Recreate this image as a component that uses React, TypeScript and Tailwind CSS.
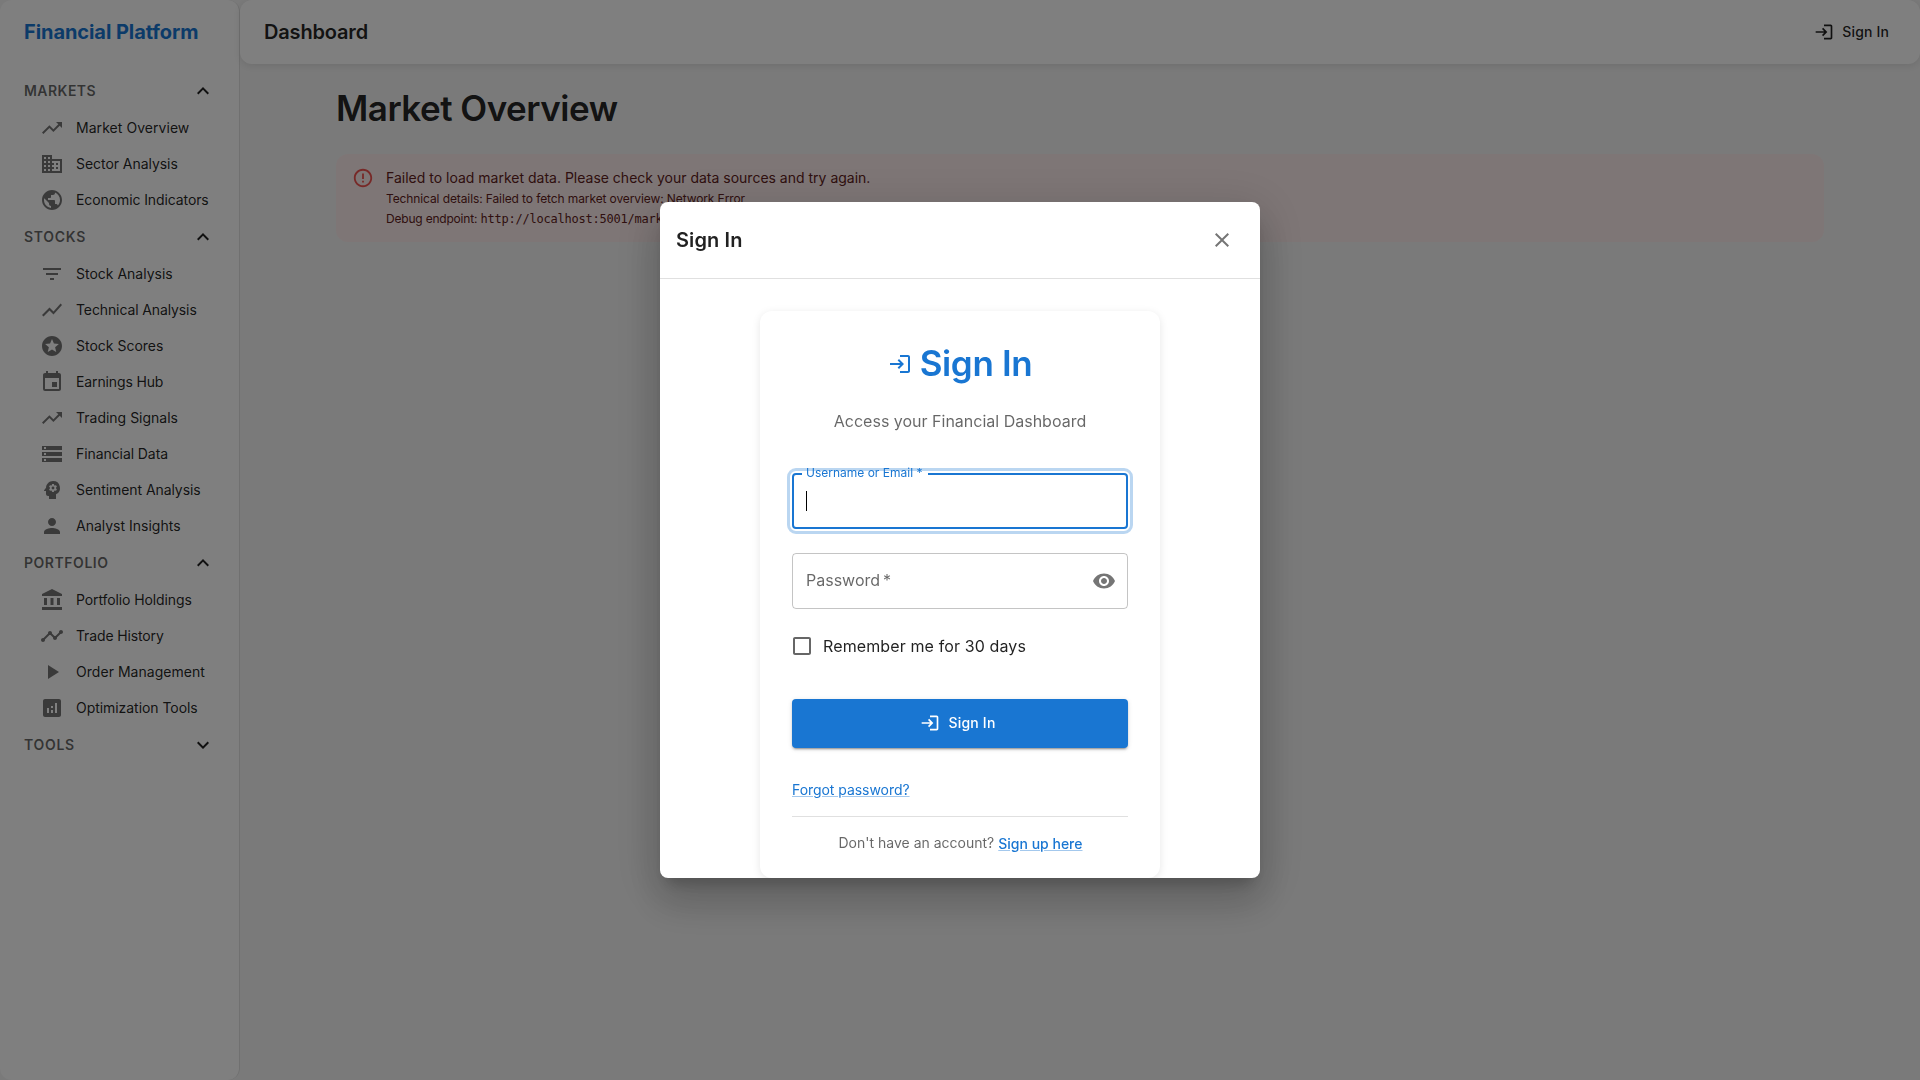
import type { IconType } from 'react-icons';
import {
  MdAccountBalance,
  MdAnalytics,
  MdBusiness,
  MdCheckBoxOutlineBlank,
  MdClose,
  MdErrorOutline,
  MdEvent,
  MdExpandLess,
  MdExpandMore,
  MdFilterList,
  MdLogin,
  MdPerson,
  MdPlayArrow,
  MdPsychology,
  MdPublic,
  MdShowChart,
  MdStars,
  MdStorage,
  MdTimeline,
  MdTrendingUp,
  MdVisibility,
} from 'react-icons/md';

type NavItem = { label: string; icon: IconType; tracking: string };
type NavGroup = { title: string; tracking: string; items: NavItem[] };

const groups: NavGroup[] = [
  {
    title: 'Markets',
    tracking: 'tracking-[0.45px]',
    items: [
      { label: 'Market Overview', icon: MdTrendingUp, tracking: 'tracking-[0.05px]' },
      { label: 'Sector Analysis', icon: MdBusiness, tracking: 'tracking-[-0.05px]' },
      { label: 'Economic Indicators', icon: MdPublic, tracking: 'tracking-[-0.1px]' },
    ],
  },
  {
    title: 'Stocks',
    tracking: 'tracking-[0.7px]',
    items: [
      { label: 'Stock Analysis', icon: MdFilterList, tracking: 'tracking-normal' },
      { label: 'Technical Analysis', icon: MdShowChart, tracking: 'tracking-[-0.11px]' },
      { label: 'Stock Scores', icon: MdStars, tracking: 'tracking-normal' },
      { label: 'Earnings Hub', icon: MdEvent, tracking: 'tracking-[-0.13px]' },
      { label: 'Trading Signals', icon: MdTrendingUp, tracking: 'tracking-normal' },
      { label: 'Financial Data', icon: MdStorage, tracking: 'tracking-[-0.08px]' },
      { label: 'Sentiment Analysis', icon: MdPsychology, tracking: 'tracking-[-0.07px]' },
      { label: 'Analyst Insights', icon: MdPerson, tracking: 'tracking-normal' },
    ],
  },
  {
    title: 'Portfolio',
    tracking: 'tracking-[0.54px]',
    items: [
      { label: 'Portfolio Holdings', icon: MdAccountBalance, tracking: 'tracking-[-0.11px]' },
      { label: 'Trade History', icon: MdTimeline, tracking: 'tracking-[-0.14px]' },
      { label: 'Order Management', icon: MdPlayArrow, tracking: 'tracking-[0.04px]' },
      { label: 'Optimization Tools', icon: MdAnalytics, tracking: 'tracking-[-0.05px]' },
    ],
  },
  { title: 'Tools', tracking: 'tracking-[0.7px]', items: [] },
];

function Sidebar() {
  return (
    <aside className="h-full w-60 shrink-0 rounded-xl border-r border-black/12 bg-white">
      <div className="flex h-16 items-center px-6">
        <div className="text-xl font-bold leading-8 tracking-[-0.07px] text-[#1976d2]">
          Financial Platform
        </div>
      </div>
      <nav className="pt-2">
        {groups.map((group) => (
          <div key={group.title}>
            <div className="flex h-[38px] items-center justify-between px-6">
              <span className={`text-sm font-semibold uppercase text-black/60 ${group.tracking}`}>
                {group.title}
              </span>
              {group.items.length > 0 ? (
                <MdExpandLess className="size-6 text-black/87" />
              ) : (
                <MdExpandMore className="size-6 text-black/87" />
              )}
            </div>
            {group.items.map(({ label, icon: Icon, tracking }) => (
              <div key={label} className="flex h-9 items-center pl-10">
                <Icon className="mr-3 size-6 text-black/54" />
                <span className={`text-sm text-black/87 ${tracking}`}>{label}</span>
              </div>
            ))}
          </div>
        ))}
      </nav>
    </aside>
  );
}

function ErrorAlert() {
  return (
    <div className="flex h-[88px] rounded-xl bg-[#fdeded] px-4 pt-[13px] text-[#5f2120]">
      <MdErrorOutline className="mr-3 size-[22px] text-[#ef5350]" />
      <div>
        <p className="text-sm leading-[22px]">
          Failed to load market data. Please check your data sources and try again.
        </p>
        <p className="text-xs leading-5 tracking-[-0.105px]">
          Technical details: Failed to fetch market overview: Network Error
        </p>
        <p className="text-xs leading-5 tracking-[-0.2px]">
          Debug endpoint:{' '}
          <code className="font-['DejaVu_Sans_Mono',monospace] tracking-[-0.22px]">
            http://localhost:5001/market/overview
          </code>
        </p>
      </div>
    </div>
  );
}

function SignInDialog() {
  return (
    <div className="fixed inset-0 flex items-center justify-center bg-black/50">
      <div
        role="dialog"
        className="flex h-[676px] w-[600px] flex-col overflow-hidden rounded-lg bg-white shadow-[0px_11px_15px_-7px_rgba(0,0,0,0.2),0px_24px_38px_3px_rgba(0,0,0,0.14),0px_9px_46px_8px_rgba(0,0,0,0.12)]"
      >
        <div className="flex h-[77px] shrink-0 items-center justify-between border-b border-black/12 pl-4 pr-[26px]">
          <h2 className="text-xl font-semibold leading-8 tracking-[0.1px] text-black/87">
            Sign In
          </h2>
          <MdClose className="size-6 text-black/54" />
        </div>
        <div className="flex justify-center pt-8">
          <div className="h-[567px] w-[400px] rounded-xl px-8 shadow-[0_2px_8px_rgba(0,0,0,0.1)]">
            <h1 className="mt-8 flex h-[42px] items-center justify-center text-[35px] font-semibold leading-[42px] tracking-[-0.35px] text-[#1976d2]">
              <MdLogin className="mr-2 size-6" />
              <span className="-mt-0.5">Sign In</span>
            </h1>
            <p className="mt-6 text-center text-base leading-6 text-black/60">
              Access your Financial Dashboard
            </p>
            <div className="relative mt-10 h-14 rounded border-2 border-[#1976d2] outline-3 outline-offset-2 outline-[#1976d2]/30">
              <div className="absolute -top-0.5 left-2 h-0.5 w-[126px] bg-white" />
              <label className="absolute -top-[11px] left-3 text-xs leading-[18px] text-[#1976d2]">
                Username or Email *
              </label>
              <div className="ml-3 mt-4 h-5 w-px bg-black" />
            </div>
            <div className="mt-6 flex h-14 items-center justify-between rounded border border-black/23 pl-[13px] pr-[11px]">
              <span className="pb-0.5 text-base text-black/60">Password{'\u2009'}*</span>
              <MdVisibility className="size-6 text-black/54" />
            </div>
            <div className="mt-4 flex h-[42px] items-center">
              <MdCheckBoxOutlineBlank className="-ml-0.5 mr-[9px] size-6 text-black/60" />
              <span className="text-base tracking-[0.12px] text-black/87">
                Remember me for 30 days
              </span>
            </div>
            <button className="mt-8 flex h-[49px] w-full items-center justify-center rounded bg-[#1976d2] pb-px pr-1 text-sm font-medium tracking-[0.2px] text-white shadow-[0px_3px_1px_-2px_rgba(0,0,0,0.2),0px_2px_2px_0px_rgba(0,0,0,0.14),0px_1px_5px_0px_rgba(0,0,0,0.12)]">
              <MdLogin className="mr-2 size-5" />
              Sign In
            </button>
            <div className="mt-8 flex h-5">
              <a className="text-sm leading-5 tracking-[-0.05px] text-[#1976d2] underline decoration-[#1976d2]/40">
                Forgot password?
              </a>
            </div>
            <div className="mt-4 border-t border-black/12" />
            <p className="mt-4 flex justify-center gap-1 pl-px text-sm leading-5 text-black/60">
              Don't have an account?
              <a className="mt-px font-medium text-[#1976d2] underline decoration-[#1976d2]/40">
                Sign up here
              </a>
            </p>
          </div>
        </div>
      </div>
    </div>
  );
}

export default function App() {
  return (
    <div className="flex h-screen overflow-hidden bg-[#f5f5f5] font-['Inter',sans-serif]">
      <Sidebar />
      <div className="flex-1">
        <header className="flex h-16 items-center justify-between rounded-xl bg-white px-6 shadow-[0_2px_8px_rgba(0,0,0,0.1)]">
          <div className="text-xl font-semibold tracking-[-0.17px] text-black/87">Dashboard</div>
          <div className="flex items-center pr-[7px] text-sm font-medium tracking-[0.15px] text-black/87">
            <MdLogin className="mr-2 size-5" />
            Sign In
          </div>
        </header>
        <main className="mx-auto w-[1488px] pt-[23px]">
          <h1 className="h-[67px] text-[35px] font-semibold leading-[42px] tracking-[-0.5px] text-black/87">
            Market Overview
          </h1>
          <ErrorAlert />
        </main>
      </div>
      <SignInDialog />
    </div>
  );
}
